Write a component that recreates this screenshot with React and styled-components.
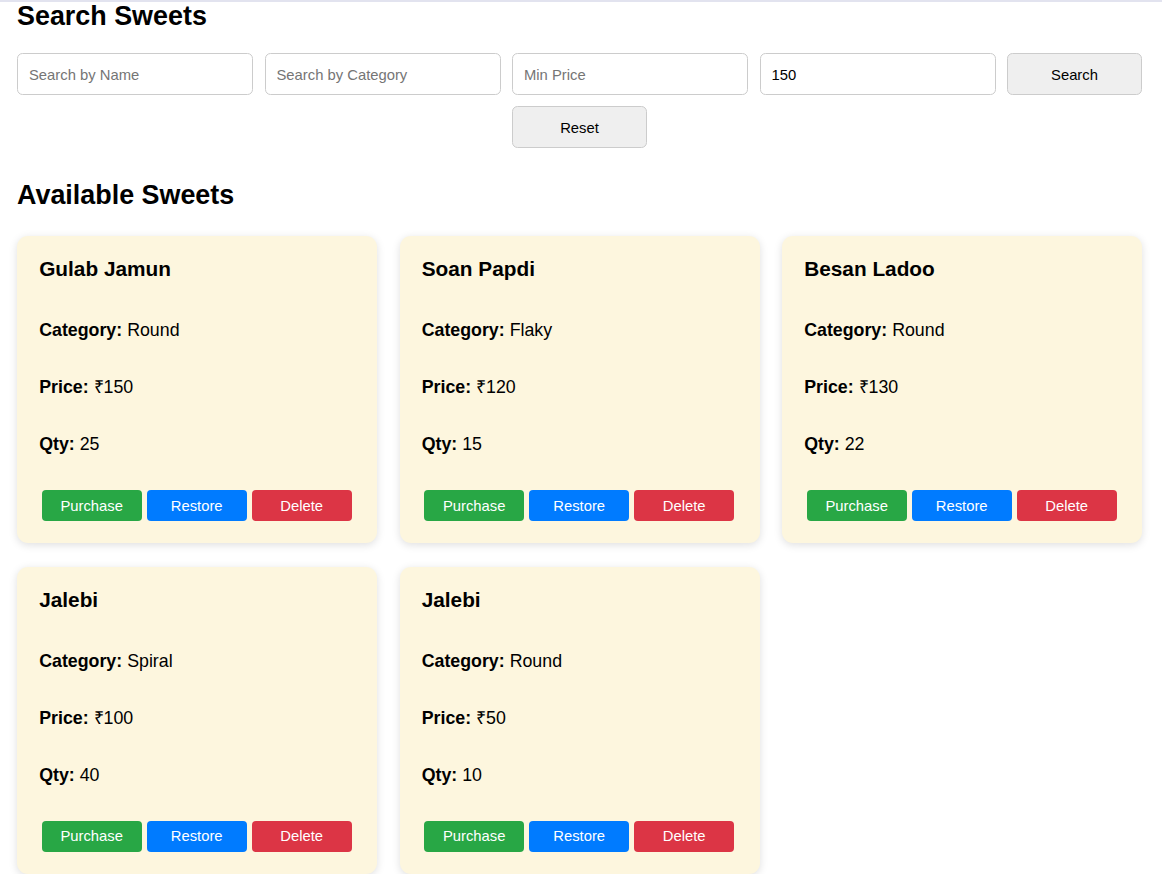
import React from "react";
import styled, { createGlobalStyle } from "styled-components";

const Global = createGlobalStyle`
  html, body { margin: 0; padding: 0; background: #fff; }
  body { font-family: "Liberation Sans", Arial, sans-serif; color: #000; }
  * { box-sizing: border-box; }
`;

const Page = styled.div`
  border-top: 2px solid #e2e3ef;
  padding: 0 20px 0 17px;
`;

const Heading = styled.h2`
  font-size: 26.9px;
  font-weight: bold;
  line-height: 30.7px;
  margin: ${(p) => (p.$first ? "-1.5px 0 22px" : "32px 0 25.5px")};
`;

const SearchBar = styled.div`
  display: flex;
  flex-wrap: wrap;
  justify-content: center;
  column-gap: 11.5px;
  row-gap: 11px;
`;

const Input = styled.input`
  width: 236px;
  height: 42px;
  padding: 2px 11px 0;
  border: 1px solid #cccccc;
  border-radius: 5.5px;
  font-family: "Liberation Sans", Arial, sans-serif;
  font-size: 14.8px;
  color: #000;
  background: #fff;
  outline: none;
  &::placeholder { color: #757575; }
`;

const GreyButton = styled.button`
  width: 135px;
  height: 42px;
  padding-top: 2px;
  border: 1px solid #cccccc;
  border-radius: 5.5px;
  background: #efefef;
  font-family: "Liberation Sans", Arial, sans-serif;
  font-size: 14.8px;
  color: #000;
  cursor: pointer;
`;

const Grid = styled.div`
  display: grid;
  grid-template-columns: repeat(3, 360px);
  column-gap: 22.5px;
  row-gap: 23.5px;
`;

const Card = styled.div`
  background: #fdf6de;
  border-radius: 11px;
  box-shadow: 0 2px 9px rgba(0, 0, 0, 0.13);
  padding: 21px 22.2px 22px;
  display: flex;
  flex-direction: column;
`;

const Title = styled.h3`
  margin: 0 0 38.6px;
  font-size: 20.8px;
  line-height: 24px;
  font-weight: bold;
`;

const Field = styled.p`
  margin: 0 0 36.6px;
  font-size: 17.8px;
  line-height: 20.4px;
  &:last-of-type { margin-bottom: 36px; }
  b { font-weight: bold; }
`;

const Actions = styled.div`
  display: flex;
  gap: 5px;
  padding-left: 2.5px;
`;

const ActionButton = styled.button`
  width: 100px;
  height: 31px;
  border: none;
  border-radius: 4px;
  background: ${(p) => p.$bg};
  color: #fff;
  font-family: "Liberation Sans", Arial, sans-serif;
  font-size: 14.8px;
  cursor: pointer;
`;

const sweets = [
  { name: "Gulab Jamun", category: "Round", price: 150, qty: 25 },
  { name: "Soan Papdi", category: "Flaky", price: 120, qty: 15 },
  { name: "Besan Ladoo", category: "Round", price: 130, qty: 22 },
  { name: "Jalebi", category: "Spiral", price: 100, qty: 40 },
  { name: "Jalebi", category: "Round", price: 50, qty: 10 },
];

export default function App() {
  return (
    <>
      <Global />
      <Page>
        <Heading $first>Search Sweets</Heading>
        <SearchBar>
          <Input placeholder="Search by Name" />
          <Input placeholder="Search by Category" />
          <Input placeholder="Min Price" />
          <Input defaultValue="150" />
          <GreyButton>Search</GreyButton>
          <GreyButton>Reset</GreyButton>
        </SearchBar>
        <Heading>Available Sweets</Heading>
        <Grid>
          {sweets.map((s, i) => (
            <Card key={i}>
              <Title>{s.name}</Title>
              <Field><b>Category:</b> {s.category}</Field>
              <Field><b>Price:</b> ₹{s.price}</Field>
              <Field><b>Qty:</b> {s.qty}</Field>
              <Actions>
                <ActionButton $bg="#28a745">Purchase</ActionButton>
                <ActionButton $bg="#007bff">Restore</ActionButton>
                <ActionButton $bg="#dc3545">Delete</ActionButton>
              </Actions>
            </Card>
          ))}
        </Grid>
      </Page>
    </>
  );
}
